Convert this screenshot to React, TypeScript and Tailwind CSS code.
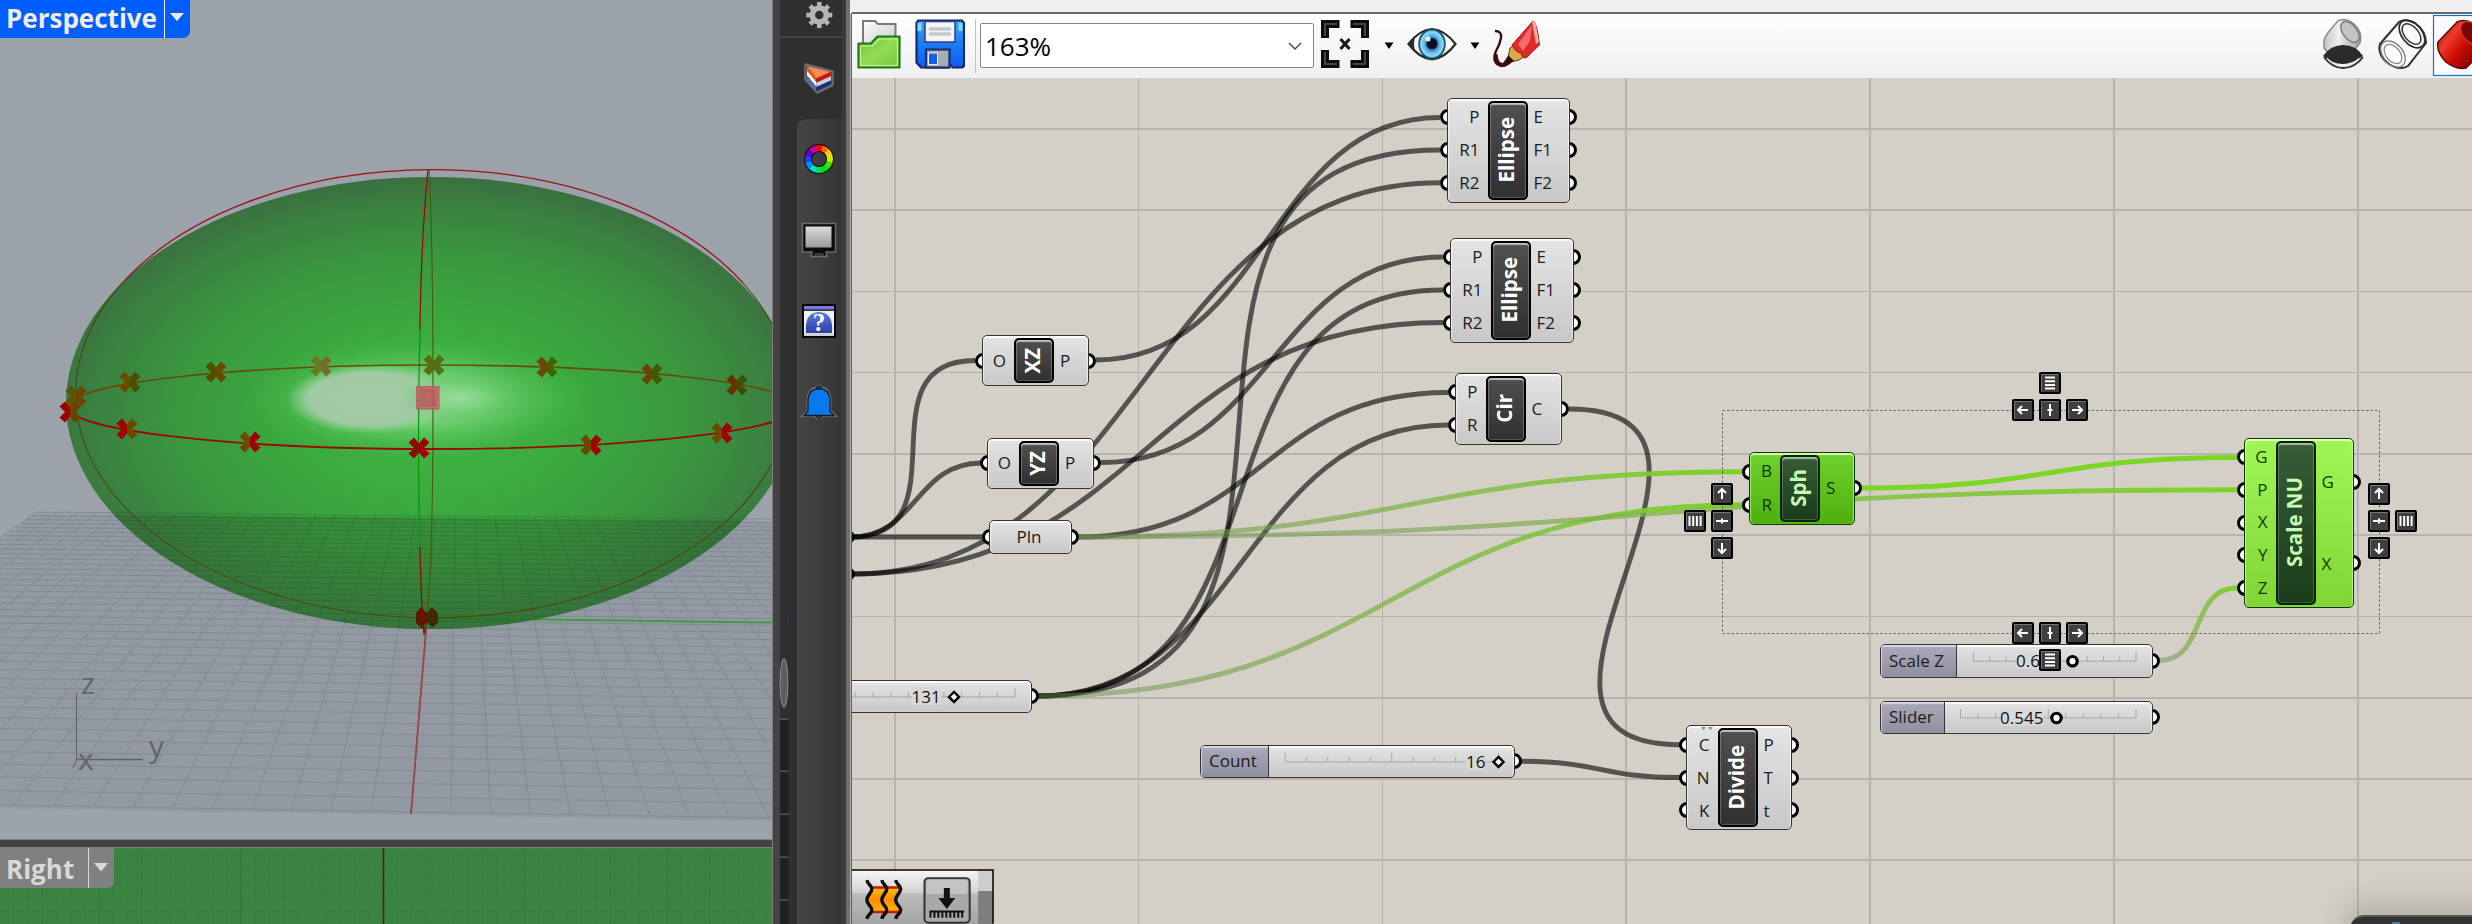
import React from "react";

type Pt = [number, number];

const OX = 852;
const OY = 78;
const UI = "font-['Open_Sans','Noto_Sans',sans-serif]";

/* ---------- 3D viewport ---------- */

const rowInfo = (i: number) => {
  const w = 1 / (0.02513 + 0.000628 * i);
  const y = 812 - (39.8 - w) / 0.0672;
  const slope = 0.0095 + ((w - 19.9) / 19.9) * 0.0073;
  return { w, y, slope, ax: 411 + (812 - y) * 0.0816 };
};
const gridPoint = (i: number, j: number): Pt => {
  const r = rowInfo(i);
  return [r.ax + j * r.w, r.y + r.slope * j * r.w];
};
const gridPath = () => {
  let d = "";
  for (let k = 0; k <= 40; k++) {
    const a = gridPoint(k, -20);
    const b = gridPoint(k, 20);
    d += `M${a[0]} ${a[1]}L${b[0]} ${b[1]}`;
    const e = gridPoint(0, k - 20);
    const f = gridPoint(40, k - 20);
    d += `M${e[0]} ${e[1]}L${f[0]} ${f[1]}`;
  }
  return d;
};
const GRID = gridPath();
const FLOOR = "M37 514L772 521V821L0 808V540Z";

function Cross({ x, y, l, r }: { x: number; y: number; l: string; r: string }) {
  return (
    <g transform={`translate(${x} ${y})`}>
      <path d="M0 -4.500L-5 -10.500L-10.500 -5.500L-5 0L-10.500 5.500L-5 10.500L0 4.500Z" fill={l} />
      <path d="M0 -4.500L5 -10.500L10.500 -5.500L5 0L10.500 5.500L5 10.500L0 4.500Z" fill={r} />
    </g>
  );
}

const backCrosses: [number, number, string, string][] = [
  [76, 396, "#5f5200", "#6d4500"],
  [130, 382, "#6b4a00", "#4a5200"],
  [216, 372, "#4f5000", "#6b4a00"],
  [321, 366, "#6a7a20", "#7a6a2c"],
  [434, 365, "#5c6a10", "#55701a"],
  [547, 367, "#6b4a00", "#3f6400"],
  [652, 374, "#6b4200", "#3c5c00"],
  [737, 385, "#6b3000", "#3f5000"],
];
const frontCrosses: [number, number, string, string][] = [
  [70, 412, "#a00000", "#6b4000"],
  [127, 429, "#a00000", "#6b4a00"],
  [250, 442, "#6b4a00", "#a00000"],
  [419, 448, "#8e0a00", "#a00000"],
  [591, 445, "#6b4a00", "#a00000"],
  [722, 433, "#6b4a00", "#a00000"],
];

function Scene() {
  return (
    <svg viewBox="0 0 772 839" className="block h-[839px] w-[772px]">
      <defs>
        <linearGradient id="sky" x1="0" y1="0" x2="0" y2="1">
          <stop offset="0" stopColor="#9ba2a9" />
          <stop offset="1" stopColor="#9ca3ab" />
        </linearGradient>
        <radialGradient id="body" gradientUnits="userSpaceOnUse" cx="0" cy="0" r="1" gradientTransform="translate(432 416) scale(385 240)">
          <stop offset="0" stopColor="#3fb643" />
          <stop offset="0.35" stopColor="#3bab3f" />
          <stop offset="0.65" stopColor="#3a983f" />
          <stop offset="0.88" stopColor="#3a8140" />
          <stop offset="1" stopColor="#3b6f40" />
        </radialGradient>
        <radialGradient id="glow">
          <stop offset="0" stopColor="#a5dca6" stopOpacity="0.95" />
          <stop offset="0.45" stopColor="#7dd681" stopOpacity="0.7" />
          <stop offset="1" stopColor="#49c04d" stopOpacity="0" />
        </radialGradient>
        <radialGradient id="spot">
          <stop offset="0" stopColor="#a3cda6" />
          <stop offset="0.75" stopColor="#9fcaa2" />
          <stop offset="1" stopColor="#8fd292" stopOpacity="0" />
        </radialGradient>
        <clipPath id="solid">
          <ellipse cx="431" cy="403" rx="365" ry="226" />
        </clipPath>
      </defs>
      <rect width="772" height="839" fill="url(#sky)" />
      <path d={FLOOR} fill="#9299a2" />
      <path d={GRID} fill="none" stroke="#828892" strokeWidth="0.9" />
      <path d="M427 618L772 622.500" stroke="#3f9c44" strokeWidth="2" />
      <path d="M427 618L411 814" stroke="#9c4144" strokeWidth="1.8" />
      <ellipse cx="431" cy="403" rx="365" ry="226" fill="url(#body)" />
      <g clipPath="url(#solid)">
        <path d={FLOOR} fill="#2a4a30" opacity="0.24" />
        <path d={GRID} fill="none" stroke="#1f4a26" strokeWidth="0.8" opacity="0.28" />
        <path d="M427 618L560 620" stroke="#1f7a22" strokeWidth="2" />
      </g>
      <ellipse cx="418" cy="399" rx="172" ry="60" fill="url(#glow)" />
      <ellipse cx="371" cy="399" rx="84" ry="35" fill="url(#spot)" />
      <ellipse cx="460" cy="398" rx="60" ry="24" fill="url(#glow)" opacity="0.8" />
      <path d="M126 279A357 224 0 0 1 743 283" fill="none" stroke="#9b1218" strokeWidth="1.3" />
      <path d="M126 279A357 224 0 1 0 743 283" fill="none" stroke="#4a4a10" strokeWidth="1.1" />
      <path d="M428 170Q421 240 420 330" fill="none" stroke="#a00000" strokeWidth="1.2" />
      <path d="M420 330Q417 440 420 548" fill="none" stroke="#009a00" strokeWidth="1.2" />
      <path d="M420 547Q421 600 424 635L427 618" fill="none" stroke="#8e0a00" strokeWidth="1.2" />
      <path d="M429 170Q433 240 433 400T427 617" fill="none" stroke="#4a5c00" strokeWidth="1.1" />
      <path d="M68 407A364 42 0 0 1 796 407" fill="none" stroke="#6b4a0a" strokeWidth="1.6" />
      <path d="M68 407A364 42 0 0 0 796 407" fill="none" stroke="#9c0a05" strokeWidth="1.8" />
      {backCrosses.map(([x, y, l, r]) => (
        <Cross key={x} x={x} y={y} l={l} r={r} />
      ))}
      {frontCrosses.map(([x, y, l, r]) => (
        <Cross key={x} x={x} y={y} l={l} r={r} />
      ))}
      <path d="M427 613L421 607L416 613V623L421 627.500L427 622Z" fill="#5a1a00" />
      <path d="M427 613L432 607L438 613V623L432 627.500L427 622Z" fill="#402a00" />
      <path d="M422 607V628" stroke="#8e0a00" strokeWidth="1.500" />
      <rect x="416" y="386" width="23.500" height="23.500" fill="#c2555c" opacity="0.88" />
      <rect x="418" y="388" width="19.500" height="19.500" fill="none" stroke="#d88a8e" strokeDasharray="1 1" />
      <path d="M420 386V409M427 393V405M421 408L426 403" stroke="#8d8a4c" strokeWidth="0.9" />
      <g stroke="#5f6266" strokeWidth="1" fill="none">
        <path d="M76.500 693V760L73 768" />
        <path d="M77 759.500H143" strokeWidth="1.500" />
        <path d="M77 757L100 756" stroke="#868b92" />
      </g>
      <g className={UI} fontSize="30" fill="#63666a">
        <text x="81" y="694">z</text>
        <text x="78" y="770">x</text>
        <text x="149" y="757">y</text>
      </g>
    </svg>
  );
}

function ViewTitle({ label, active }: { label: string; active?: boolean }) {
  return (
    <div
      className={
        active
          ? "absolute left-0 top-0 flex h-[38px] w-[190px] rounded-br-[7px] bg-[#005eff] text-[#f1ecdd]"
          : "absolute left-0 top-0 flex h-[40px] w-[114px] rounded-br-[7px] bg-[#808080] text-[#d9d9d9]"
      }
    >
      <div className={active ? "w-[164px] pl-[6px]" : "w-[88px] pl-[6px]"}>
        <span className={`${UI} block text-[26px] font-bold ${active ? "leading-[37px]" : "leading-[42px]"}`}>{label}</span>
      </div>
      <div className="w-px bg-current" />
      <svg viewBox="0 0 25 38" className="h-[38px] w-[25px]">
        <path d={active ? "M5 13H19L12 21Z" : "M5 15H19L12 23.500Z"} fill="currentColor" />
      </svg>
    </div>
  );
}

function RightView() {
  const fine: React.ReactNode[] = [];
  for (let k = -27; k < 28; k++) {
    const x = 383 + k * 14.2;
    fine.push(<path key={"v" + k} d={`M${x} 0V76`} stroke="#2b6b31" opacity={k % 10 === 0 ? 0.55 : 0.22} />);
  }
  for (let k = 0; k < 6; k++) {
    fine.push(<path key={"h" + k} d={`M0 ${6.5 + k * 14.3}H772`} stroke="#2b6b31" opacity={0.22} />);
  }
  return (
    <div className="relative h-[76px] w-[772px] overflow-hidden bg-[#3a8340]">
      <svg viewBox="0 0 772 76" className="block h-[76px] w-[772px]">
        {fine}
        <path d="M383.500 0V76" stroke="#6b1a05" strokeWidth="1.500" />
      </svg>
      <ViewTitle label="Right" />
    </div>
  );
}

/* ---------- dark side panel ---------- */

function SidePanel() {
  const hues = ["#ff0000", "#ff6a00", "#ffd000", "#c8f000", "#40e000", "#00e000", "#00e060", "#00e0c0", "#0090ff", "#2040ff", "#6000d0", "#c000a0"];
  return (
    <svg viewBox="772 0 80 924" className="block h-[924px] w-[80px] shrink-0">
      <defs>
        <linearGradient id="panel" x1="0" x2="1">
          <stop offset="0" stopColor="#454545" />
          <stop offset="1" stopColor="#353535" />
        </linearGradient>
        <linearGradient id="screen" x1="0" y1="0" x2="0" y2="1">
          <stop offset="0" stopColor="#dcdcdc" />
          <stop offset="1" stopColor="#9a9a9a" />
        </linearGradient>
        <linearGradient id="help" x1="0" y1="0" x2="0" y2="1">
          <stop offset="0" stopColor="#5f7ae6" />
          <stop offset="1" stopColor="#2c3ea0" />
        </linearGradient>
      </defs>
      <rect x="772" y="0" width="80" height="924" fill="#434343" />
      <rect x="771" y="0" width="2" height="924" fill="#7c7c7c" />
      <rect x="780" y="0" width="18" height="924" fill="#2f2f2f" />
      <rect x="797" y="100" width="45" height="824" fill="url(#panel)" />
      <path d="M780 38H842V110Q842 119 833 119H807Q797 119 797 129V200H780Z" fill="#2f2f2f" />
      <path d="M780 0H842V36H780Z" fill="#2f2f2f" />
      <rect x="780" y="36" width="62" height="2" fill="#454545" />
      <rect x="842" y="0" width="4" height="924" fill="#3a3a3a" />
      <rect x="846" y="0" width="4.500" height="924" fill="#707070" />
      <rect x="850" y="0" width="2" height="14" fill="#efefef" />
      <rect x="850" y="14" width="1" height="910" fill="#b0b0b0" />
      <rect x="851" y="13" width="1" height="911" fill="#5f5f5f" />
      <rect x="780" y="719" width="8.500" height="205" fill="#202020" />
      {[718.5, 770.5, 813.5, 856.5, 899.5].map((y) => (
        <rect key={y} x="780" y={y} width="8.500" height="1.500" fill="#555" />
      ))}
      <rect x="787.500" y="616" width="1" height="7" fill="#2a3a80" />
      <ellipse cx="784" cy="683" rx="3.800" ry="24.500" fill="#5e5e5e" stroke="#8e8e8e" strokeWidth="1" />

      <g transform="translate(819.300 15)">
        {[0, 45, 90, 135, 180, 225, 270, 315].map((a) => (
          <rect key={a} x="-2.300" y="-13" width="4.600" height="7" fill="#b5b5b5" transform={`rotate(${a})`} />
        ))}
        <circle r="7" fill="none" stroke="#b5b5b5" strokeWidth="5.500" />
      </g>

      <g transform="translate(819 78.500)" strokeLinejoin="round">
        <path d="M-13.500 -14L13.500 -7V6.500L-2 14L-13.500 1Z" fill="#111" stroke="#6b6b6b" strokeWidth="2.500" />
        <path d="M-12 -12.500L12 -6.500L-2.500 0Z" fill="#f08a5f" />
        <path d="M-12 -12.500L-2.500 0V4L-12 -8Z" fill="#ee5a18" />
        <path d="M-2.500 0L12 -6.500V-2.500L-2.500 4Z" fill="#d80f0f" />
        <path d="M-12 -8L-2.500 4V8.500L-12 -3Z" fill="#fff" />
        <path d="M-2.500 4L12 -2.500V2L-2.500 8.500Z" fill="#cfcfcf" />
        <path d="M-12 -3L-2.500 8.500V12.500L-12 1Z" fill="#4a6ae0" />
        <path d="M-2.500 8.500L12 2V5.500L-2.500 12.500Z" fill="#1c3488" />
      </g>

      <g transform="translate(819 159)">
        <circle r="11" fill="none" stroke="#0a0a0a" strokeWidth="8" />
        {hues.map((c, i) => (
          <path key={c} d="M0 -11A11 11 0 0 1 5.900 -9.300" transform={`rotate(${i * 30 - 15})`} stroke={c} strokeWidth="6" fill="none" />
        ))}
      </g>

      <g transform="translate(819 239)">
        <path d="M-16.500 -15.500H16.500V13H7L8 17.500H-8L-7 13H-16.500Z" fill="#0b0b0b" stroke="#6b6b6b" strokeWidth="1.500" />
        <rect x="-13.500" y="-12.500" width="26" height="21" fill="url(#screen)" />
        <path d="M-4 14H4L6 17H-6Z" fill="#3a3a3a" />
      </g>

      <g transform="translate(819 321)">
        <rect x="-16" y="-16" width="32" height="32" fill="#f0f0f0" stroke="#080808" strokeWidth="2" />
        <rect x="-15" y="-15" width="30" height="4" fill="#7b78d8" />
        <rect x="-15" y="-11.500" width="30" height="1.300" fill="#111" />
        <path d="M-13 12Q-15 -8.500 0 -9Q15 -8.500 13 12Z" fill="url(#help)" />
        <path d="M-15 12.500H15V15H-15Z" fill="#cfcfcf" />
        <text x="0" y="9.500" textAnchor="middle" fontSize="25" fontWeight="bold" fill="#fff" className="font-['Liberation_Serif',serif]">
          ?
        </text>
      </g>

      <g transform="translate(819 402)" stroke="#1b1b1b" strokeWidth="1.300">
        <path d="M-15.500 13.500L-11 9V-3Q-10 -13 -3 -14Q0 -18 3 -14Q10 -13 11 -3V9L15.500 13.500Q9 13 4 13.500Q0 18 -4 13.500Q-9 13 -15.500 13.500Z" fill="none" stroke="#707070" strokeWidth="3" />
        <circle cy="-13.500" r="2.400" fill="#0b63c8" />
        <circle cy="13.500" r="2.600" fill="#0b63c8" />
        <path d="M-15 13.500L-11 9V-3Q-10 -13 0 -13.500Q10 -13 11 -3V9L15 13.500Z" fill="#0878ee" />
      </g>
    </svg>
  );
}

/* ---------- toolbar ---------- */

function FolderIcon() {
  return (
    <svg viewBox="0 0 44 50" className="h-[50px] w-[44px]">
      <defs>
        <linearGradient id="fold" x1="0" y1="0" x2="1" y2="1">
          <stop offset="0" stopColor="#6fbf3c" />
          <stop offset="0.5" stopColor="#92dc52" />
          <stop offset="1" stopColor="#74c540" />
        </linearGradient>
        <linearGradient id="pap" x1="0" y1="0" x2="1" y2="1">
          <stop offset="0" stopColor="#fff" />
          <stop offset="1" stopColor="#c9c9c9" />
        </linearGradient>
      </defs>
      <path d="M6 26V2H18L21 5H38.500V26Z" fill="url(#pap)" stroke="#7a7a7a" strokeWidth="2" />
      <path d="M1.500 48.500V24.500H14L20.500 17.500H42.500V48.500Z" fill="url(#fold)" stroke="#1c7a18" strokeWidth="2.200" strokeLinejoin="round" />
      <path d="M3.500 46.500V27H15.500L22 20H40.500V46.500Z" fill="none" stroke="#c8f29b" strokeWidth="1.200" />
    </svg>
  );
}

function SaveIcon() {
  return (
    <svg viewBox="0 0 50 50" className="h-[50px] w-[50px]">
      <defs>
        <linearGradient id="disk" x1="0" y1="0" x2="0" y2="1">
          <stop offset="0" stopColor="#3aa5f5" />
          <stop offset="0.5" stopColor="#1c7cf0" />
          <stop offset="1" stopColor="#0f5cf5" />
        </linearGradient>
      </defs>
      <path d="M3 1.500H47L49 4V46Q49 48.500 46 48.500H37.500L36 46H33V48.500H6L1.500 43.500V4Z" fill="url(#disk)" stroke="#15296e" strokeWidth="2.200" />
      <path d="M4.500 4V12M45.500 4V12" stroke="#7adcff" strokeWidth="4" />
      <rect x="10" y="2.500" width="30" height="20.500" fill="#f4f4f4" stroke="#24418a" strokeWidth="1.500" />
      <path d="M14 10H36M14 15H36" stroke="#c3c9c9" strokeWidth="3.500" />
      <rect x="11" y="30.500" width="23.500" height="18" fill="#a9adb5" stroke="#1a3070" strokeWidth="2.200" />
      <rect x="13.500" y="34" width="9" height="11.500" fill="#155eee" stroke="#f0f0f0" strokeWidth="1" />
    </svg>
  );
}

function FrameIcon() {
  return (
    <svg viewBox="0 0 50 50" className="h-[50px] w-[50px]">
      <g fill="none" stroke="#0c0c0c" strokeWidth="8">
        <path d="M5 19V5H19.500M30.500 5H45V19M45 31V45H30.500M19.500 45H5V31" />
      </g>
      <g fill="none" stroke="#444" strokeWidth="2">
        <path d="M5 17V5H17M33 5H45V17M45 33V45H33M17 45H5V33" />
      </g>
      <path d="M20.500 20L29.500 30M29.500 20L20.500 30" stroke="#1a1a1a" strokeWidth="3.200" />
    </svg>
  );
}

function EyeIcon() {
  return (
    <svg viewBox="0 0 50 34" className="h-[34px] w-[50px]">
      <defs>
        <radialGradient id="iris">
          <stop offset="0.3" stopColor="#1b4fa8" />
          <stop offset="0.6" stopColor="#63b8e8" />
          <stop offset="0.85" stopColor="#8adcf8" />
          <stop offset="1" stopColor="#2c6f94" />
        </radialGradient>
      </defs>
      <path d="M1.500 17Q12 3 25 2Q38 3 48.500 17Q38 31 25 32.500Q12 31 1.500 17Z" fill="#f7f7f7" stroke="#2b2b2b" strokeWidth="2.200" />
      <path d="M1 17L8 11Q6 17 8 23Z" fill="#2b2b2b" />
      <ellipse cx="25" cy="17" rx="13" ry="14.500" fill="url(#iris)" stroke="#1c4c6b" strokeWidth="1.500" />
      <circle cx="25" cy="16.500" r="5.500" fill="#06101f" />
      <circle cx="21" cy="12" r="2.600" fill="#fff" opacity="0.85" />
    </svg>
  );
}

function PenIcon() {
  return (
    <svg viewBox="0 0 48 48" className="h-[48px] w-[48px]">
      <path d="M3 11Q10 11 9 18Q8 24 4 31Q-1 43 9 46Q15 46 20 40" fill="none" stroke="#3a0808" strokeWidth="2.300" />
      <path d="M2 34Q1 44 10 47Q16 46.500 22 40L16 36L11 43Q6 43 5.500 34Z" fill="#3a0c0c" />
      <path d="M15 43L18 28L22 25L33 36L27 40Z" fill="#d8aa4a" stroke="#5a3a10" strokeWidth="1" />
      <path d="M14 45L16 35L22 41Z" fill="#2a0808" />
      <path d="M20 25L41 1Q45 2 47.500 25L34 38Q30 38 29 33Q24 33 20 25Z" fill="#dd2b2b" stroke="#a31b1b" strokeWidth="1" />
      <path d="M26 24L40 5L38 21L31 31Z" fill="#f46a6a" />
      <path d="M40 2L43 0L47 22L44 24Z" fill="#eaa9a9" />
    </svg>
  );
}

function DropArrow() {
  return (
    <svg viewBox="0 0 10 8" className="mt-[4px] h-[8px] w-[10px]">
      <path d="M0.500 0.500H9.500L5 7Z" fill="#000" />
    </svg>
  );
}

function Toolbar() {
  return (
    <div className="flex h-[64px] w-full items-center overflow-hidden bg-gradient-to-b from-[#fdfdfd] to-[#f0f0f0] pl-[5px]">
      <div className="mt-[-4px] flex h-[60px] items-center">
        <FolderIcon />
        <div className="w-[14px]" />
        <SaveIcon />
        <div className="ml-[10px] mr-[4px] mt-[4px] h-[54px] w-px bg-[#c2c2c2]" />
        <div className="mt-[3px] flex h-[45px] w-[334px] items-center justify-between rounded-[2px] border border-[#858585] bg-white pl-[4px] pr-[11px]">
          <span className={`${UI} text-[26px] leading-none text-black`}>163%</span>
          <svg viewBox="0 0 14 8" className="h-[8px] w-[14px]">
            <path d="M1 1L7 7L13 1" fill="none" stroke="#444" strokeWidth="1.400" />
          </svg>
        </div>
        <div className="w-[6px]" />
        <FrameIcon />
        <div className="w-[14px]" />
        <DropArrow />
        <div className="w-[13px]" />
        <EyeIcon />
        <div className="w-[13px]" />
        <DropArrow />
        <div className="w-[12px]" />
        <PenIcon />
      </div>
      <div className="flex-1" />
      <svg viewBox="2320 14 152 64" className="h-[64px] w-[152px] shrink-0">
        <defs>
          <linearGradient id="cy1" x1="0" x2="1">
            <stop offset="0" stopColor="#c4c4c4" />
            <stop offset="0.4" stopColor="#f0f0f0" />
            <stop offset="1" stopColor="#9c9c9c" />
          </linearGradient>
          <linearGradient id="cy2" x1="0" y1="0" x2="1" y2="1">
            <stop offset="0" stopColor="#8e0a05" />
            <stop offset="0.35" stopColor="#ee3a2c" />
            <stop offset="0.6" stopColor="#cf0d05" />
            <stop offset="1" stopColor="#6e0503" />
          </linearGradient>
        </defs>
        <path d="M2324 41Q2324 36 2338 21Q2345 17 2354 24Q2363 32 2360 43L2350 56Q2330 58 2324 48Z" fill="url(#cy1)" stroke="#8a8a8a" strokeWidth="1.500" />
        <ellipse cx="2350" cy="32" rx="7" ry="12" transform="rotate(-38 2350 32)" fill="#c4c4c4" stroke="#808080" strokeWidth="1.500" />
        <path d="M2323 56Q2331 45 2343 45Q2356 45 2363 56Q2352 64 2343 64Q2332 64 2323 56Z" fill="#2b2b2b" />
        <path d="M2324 57Q2332 68 2343 68Q2355 68 2363 57" fill="none" stroke="#333" strokeWidth="2" />
        <path d="M2327 58.500Q2335 66 2343 66Q2352 66 2359 58.500" fill="none" stroke="#e6e6e6" strokeWidth="1.200" />
        <g fill="none" stroke="#2f2f2f">
          <path d="M2380 44L2399 22Q2405 18 2415 23Q2426 31 2426 43L2408 66Q2400 71 2389 64Q2377 55 2380 44Z" fill="#fafafa" strokeWidth="2" />
          <ellipse cx="2412" cy="34" rx="10" ry="16" transform="rotate(-40 2412 34)" strokeWidth="1.700" />
          <ellipse cx="2411.500" cy="34" rx="7" ry="12" transform="rotate(-40 2411.500 34)" strokeWidth="1.400" />
          <ellipse cx="2393" cy="54" rx="10" ry="15" transform="rotate(-40 2393 54)" stroke="#7a7a7a" strokeWidth="1.300" />
          <ellipse cx="2393" cy="54" rx="7" ry="11" transform="rotate(-40 2393 54)" stroke="#8a8a8a" strokeWidth="1.200" />
        </g>
        <rect x="2433.500" y="15.500" width="60" height="60" fill="#fbfbfb" stroke="#1275cc" strokeWidth="1.200" />
        <path d="M2438 42L2457 22Q2464 18 2474 24V60L2466 68Q2456 70 2446 62Q2436 52 2438 42Z" fill="url(#cy2)" stroke="#5a0805" strokeWidth="1.500" />
        <ellipse cx="2471" cy="33" rx="8.500" ry="13" transform="rotate(-38 2471 33)" fill="#7a0603" stroke="#e03a30" strokeWidth="1.200" />
      </svg>
    </div>
  );
}

/* ---------- graph canvas ---------- */

interface NodeData {
  x: number;
  y: number;
  w: number;
  h: number;
  core: number;
  title: string;
  ins: string[];
  outs: string[];
  tone: "grey" | "green" | "lime";
}

const nodes: NodeData[] = [
  { x: 1447, y: 97.5, w: 123, h: 105, core: 41, title: "Ellipse", ins: ["P", "R1", "R2"], outs: ["E", "F1", "F2"], tone: "grey" },
  { x: 1450, y: 237.5, w: 123.5, h: 105, core: 41, title: "Ellipse", ins: ["P", "R1", "R2"], outs: ["E", "F1", "F2"], tone: "grey" },
  { x: 1455, y: 372.5, w: 107, h: 72, core: 31, title: "Cir", ins: ["P", "R"], outs: ["C"], tone: "grey" },
  { x: 982, y: 335, w: 107, h: 51, core: 32.5, title: "XZ", ins: ["O"], outs: ["P"], tone: "grey" },
  { x: 987, y: 437.5, w: 107, h: 51, core: 32.5, title: "YZ", ins: ["O"], outs: ["P"], tone: "grey" },
  { x: 1686, y: 725, w: 106, h: 105, core: 32, title: "Divide", ins: ["C", "N", "K"], outs: ["P", "T", "t"], tone: "grey" },
  { x: 1749, y: 451.5, w: 106, h: 73, core: 31.5, title: "Sph", ins: ["B", "R"], outs: ["S"], tone: "green" },
  { x: 2243.5, y: 437.5, w: 110, h: 170, core: 32.5, title: "Scale NU", ins: ["G", "P", "X", "Y", "Z"], outs: ["G", "X"], tone: "lime" },
];

const shell = {
  grey: "border-[#333] from-[#e4e4e4] to-[#c8c8c8] text-[#1c1c1c]",
  green: "border-[#0d3808] from-[#6fd12c] to-[#4fb00c] text-[#0f3306]",
  lime: "border-[#0d3808] from-[#a0f754] to-[#80d534] text-[#143806]",
};
const rim = {
  grey: "shadow-[inset_0_2px_1px_rgba(255,255,255,0.9),inset_1px_0_1px_rgba(255,255,255,0.6),inset_-1px_0_1px_rgba(255,255,255,0.6)]",
  green: "shadow-[inset_0_2px_1px_rgba(225,255,190,0.9),inset_1px_0_1px_rgba(200,255,150,0.6),inset_-1px_0_1px_rgba(200,255,150,0.6)]",
  lime: "shadow-[inset_0_2px_1px_rgba(235,255,210,0.9),inset_1px_0_1px_rgba(220,255,180,0.6),inset_-1px_0_1px_rgba(220,255,180,0.6)]",
};

function Port({ x, y }: { x: number; y: number }) {
  return (
    <div
      className="absolute h-[16px] w-[16px] rounded-full border-[3px] border-black bg-white"
      style={{ left: x - 8, top: y - 8 }}
    />
  );
}

function Component({ n }: { n: NodeData }) {
  const inner = n.h - 7;
  const portY = (i: number, count: number) => 3.5 + (inner * (i + 0.5)) / count;
  const core =
    n.tone === "grey"
      ? "from-[#505050] to-[#303030] border-black text-white shadow-[inset_0_2px_1px_rgba(255,255,255,0.6),inset_0_0_0_1px_rgba(255,255,255,0.18)]"
      : "from-[#385c38] to-[#193c1a] border-[#082208] text-[#c2ffb0] shadow-[inset_0_2px_1px_rgba(230,255,230,0.6),inset_0_0_0_1px_rgba(255,255,255,0.15)]";
  return (
    <div className="absolute" style={{ left: n.x - OX, top: n.y - OY, width: n.w, height: n.h }}>
      {n.ins.map((_, i) => (
        <Port key={"i" + i} x={1} y={portY(i, n.ins.length)} />
      ))}
      {n.outs.map((_, i) => (
        <Port key={"o" + i} x={n.w - 1} y={portY(i, n.outs.length)} />
      ))}
      <div className={`${UI} ${shell[n.tone]} ${rim[n.tone]} absolute inset-0 flex rounded-[5px] border-[1.500px] bg-gradient-to-b py-[2px] text-[17px] leading-none`}>
        <div className="flex flex-col items-end pr-[8px]" style={{ width: n.core - 1.5 }}>
          {n.ins.map((t) => (
            <div key={t} className="flex flex-1 items-center pb-[1px]">
              {t}
            </div>
          ))}
        </div>
        <div className={`${core} flex w-[40px] items-center justify-center rounded-[5px] border-2 bg-gradient-to-b pr-[3px]`}>
          <span className="rotate-180 whitespace-nowrap text-[20.500px] font-bold leading-none [writing-mode:vertical-rl]">{n.title}</span>
        </div>
        <div className="flex flex-col items-start pl-[6px]">
          {n.outs.map((t) => (
            <div key={t} className="flex flex-1 items-center pb-[1px]">
              {t}
            </div>
          ))}
        </div>
      </div>
    </div>
  );
}

interface SliderData {
  x: number;
  y: number;
  w: number;
  h: number;
  label?: string;
  labelW: number;
  base: [number, number];
  steps: number;
  tall: number[];
  value: string;
  valueX: number;
  knob: number;
  round?: boolean;
}

const sliders: SliderData[] = [
  { x: 840, y: 679.5, w: 192, h: 33.5, labelW: 0, base: [837.5, 1015], steps: 10, tall: [5, 10], value: "131", valueX: 911.5, knob: 954 },
  { x: 1199.5, y: 744.5, w: 315, h: 33.5, label: "Count", labelW: 69, base: [1284.5, 1498], steps: 10, tall: [0, 5, 10], value: "16", valueX: 1466, knob: 1498 },
  { x: 1879.5, y: 643.5, w: 273, h: 34, label: "Scale Z", labelW: 77, base: [1973, 2135.5], steps: 10, tall: [0, 10], value: "0.6", valueX: 2016, knob: 2072, round: true },
  { x: 1879.5, y: 700.5, w: 273, h: 33.5, label: "Slider", labelW: 65.5, base: [1960, 2135.5], steps: 10, tall: [0, 5, 10], value: "0.545", valueX: 2000, knob: 2056, round: true },
];

function Slider({ s }: { s: SliderData }) {
  const cy = s.h / 2 + 0.2;
  const ticks: React.ReactNode[] = [];
  for (let i = 0; i <= s.steps; i++) {
    const x = s.base[0] - s.x + ((s.base[1] - s.base[0]) * i) / s.steps;
    const hgt = s.tall.includes(i) ? 9 : 5;
    ticks.push(<path key={i} d={`M${x} ${cy}v${-hgt}`} stroke="#a8a8a8" />);
  }
  return (
    <div className="absolute" style={{ left: s.x - OX, top: s.y - OY, width: s.w, height: s.h }}>
      <Port x={s.w - 1} y={s.h / 2} />
      <div className={`${UI} ${shell.grey} ${rim.grey} absolute inset-0 flex overflow-hidden rounded-[5px] border-[1.500px] bg-gradient-to-b text-[17px] leading-none`}>
        {s.label && (
          <div
            className="flex items-center border-r-[1.500px] border-[#333] bg-gradient-to-b from-[#aaaaba] to-[#8f8fa1] pl-[8.500px] shadow-[inset_1px_2px_1px_rgba(235,235,250,0.7)]"
            style={{ width: s.labelW - 1 }}
          >
            <span className="whitespace-nowrap pb-[1px] text-[17px]">{s.label}</span>
          </div>
        )}
      </div>
      <svg className="absolute left-0 top-0 overflow-visible" width={s.w} height={s.h}>
        <path d={`M${s.base[0] - s.x} ${cy}H${s.base[1] - s.x}`} stroke="#a8a8a8" />
        {ticks}
        {s.round ? (
          <circle cx={s.knob - s.x} cy={cy} r="4.700" fill="#fff" stroke="#000" strokeWidth="3.200" />
        ) : (
          <path d="M0 -5L5 0L0 5L-5 0Z" transform={`translate(${s.knob - s.x} ${cy})`} fill="#fff" stroke="#000" strokeWidth="2.400" />
        )}
      </svg>
      <span
        className={`${UI} absolute top-[calc(50%-0.500px)] -translate-y-1/2 bg-[#d8d8d8] text-[17px] leading-none text-[#111]`}
        style={{ left: s.valueX - s.x }}
      >
        {s.value}
      </span>
    </div>
  );
}

const wire = (x1: number, y1: number, x2: number, y2: number) => {
  const off = Math.max((x2 - x1) / 2, Math.abs(y2 - y1) * 0.66);
  return `M${x1} ${y1}C${x1 + off} ${y1} ${x2 - off} ${y2} ${x2} ${y2}`;
};

const plainWires: [number, number, number, number][] = [
  [851, 537, 975, 360.5],
  [851, 537, 981, 463],
  [851, 537, 982, 537],
  [851, 574, 1440, 182.8],
  [851, 574, 1443, 322.5],
  [1096, 360, 1440, 117.5],
  [1101, 462.5, 1443, 257],
  [1078, 537, 1448, 392.5],
  [1038, 696, 1440, 150],
  [1038, 696, 1443, 290],
  [1038, 696, 1448, 425],
  [1569, 409, 1680, 744.7],
  [1521, 761.3, 1680, 777.5],
];
const fadedWires: [number, number, number, number][] = [
  [1078, 537, 1743, 471.7],
  [1038, 696, 1743, 504.7],
  [1078, 537, 2237, 489.8],
  [2159, 660.5, 2237, 588],
];

const vlines: Pt[] = [[895, 2], [1138.5, 1], [1382.5, 1], [1626, 2], [1870, 2], [2114, 2], [2358, 2]];
const hlines: Pt[] = [[129, 2], [210, 2], [291.5, 1], [372.5, 1], [454, 2], [535, 2], [616.5, 1], [698, 2], [779, 2], [860, 2]];

function Wires() {
  return (
    <svg viewBox="852 78 1620 846" className="absolute inset-0 h-[846px] w-[1620px]">
      <defs>
        {fadedWires.map(([x1, , x2], i) => (
          <linearGradient key={i} id={"fade" + i} gradientUnits="userSpaceOnUse" x1={x1} x2={x2} y1="0" y2="0">
            <stop offset="0" stopColor="#6f8a50" stopOpacity="0.45" />
            <stop offset="0.5" stopColor="#80b548" stopOpacity="0.75" />
            <stop offset="1" stopColor="#7cd424" stopOpacity="1" />
          </linearGradient>
        ))}
      </defs>
      <g stroke="#000" opacity="0.13">
        {vlines.map(([x, w]) => (
          <path key={x} d={`M${x} 78V924`} strokeWidth={w} />
        ))}
        {hlines.map(([y, w]) => (
          <path key={y} d={`M852 ${y}H2472`} strokeWidth={w} />
        ))}
      </g>
      <g fill="none" stroke="#000" strokeOpacity="0.6" strokeWidth="4.900">
        {plainWires.map((p, i) => (
          <path key={i} d={wire(...p)} />
        ))}
      </g>
      <g fill="none" strokeWidth="4.900">
        {fadedWires.map((p, i) => (
          <path key={i} d={wire(...p)} stroke={`url(#fade${i})`} />
        ))}
        <path d={wire(1862, 488, 2237, 457.5)} stroke="#7cd624" />
      </g>
      <circle cx="849" cy="537" r="6" fill="#000" />
      <circle cx="849" cy="574" r="6" fill="#000" />
    </svg>
  );
}

type Glyph = "left" | "right" | "up" | "down" | "h" | "v" | "rows" | "cols";
const glyphs: Record<Glyph, string> = {
  left: "M16 11H6M10 7L6 11L10 15",
  right: "M6 11H16M12 7L16 11L12 15",
  up: "M11 16V6M7 10L11 6L15 10",
  down: "M11 6V16M7 12L11 16L15 12",
  h: "M5 11H17M11 8.500V13.500",
  v: "M11 5V17M8.500 11H13.500",
  rows: "M6 5.500H16M6 9.200H16M6 12.900H16M6 16.600H16",
  cols: "M5.500 6V16M9.200 6V16M12.900 6V16M16.600 6V16",
};
const handles: [number, number, Glyph][] = [
  [2050, 383, "rows"], [2023, 410, "left"], [2050, 410, "v"], [2077, 410, "right"],
  [2023, 633, "left"], [2050, 633, "v"], [2077, 633, "right"], [2050, 660, "rows"],
  [1722, 494, "up"], [1722, 521, "h"], [1722, 548, "down"], [1695, 521, "cols"],
  [2379, 494, "up"], [2379, 521, "h"], [2379, 548, "down"], [2406, 521, "cols"],
];

function Handle({ x, y, g }: { x: number; y: number; g: Glyph }) {
  return (
    <svg viewBox="0 0 22 22" className="absolute h-[22px] w-[22px]" style={{ left: x - 11 - OX, top: y - 11 - OY }}>
      <rect x="1" y="1" width="20" height="20" rx="1" fill="#3f3f3f" stroke="#000" strokeWidth="2" />
      <path d="M2.500 19.500V2.500H19.500" fill="none" stroke="#777" />
      <path d={glyphs[g]} fill="none" stroke="#fff" strokeWidth="2" />
    </svg>
  );
}

const heatWave = (x: number) =>
  `M${x} 880C${x + 1} 885 ${x + 5} 885 ${x + 5} 889S${x} 895 ${x} 900S${x + 5} 906 ${x + 5} 910S${x + 1} 914 ${x} 919`;

function CornerPalette() {
  return (
    <svg viewBox="851 869 143 55" className="absolute bottom-0 left-0 h-[55px] w-[142px]">
      <defs>
        <linearGradient id="pal" x1="0" y1="0" x2="0" y2="1">
          <stop offset="0" stopColor="#f6f6f6" />
          <stop offset="0.4" stopColor="#d2d2d2" />
          <stop offset="0.42" stopColor="#bcbcbc" />
          <stop offset="1" stopColor="#a2a2a2" />
        </linearGradient>
        <linearGradient id="heat" x1="0" y1="0" x2="0" y2="1">
          <stop offset="0" stopColor="#ffc400" />
          <stop offset="0.5" stopColor="#ff8a00" />
          <stop offset="1" stopColor="#ffb800" />
        </linearGradient>
      </defs>
      <rect x="851" y="870" width="142" height="56" fill="url(#pal)" />
      <rect x="978" y="870" width="15" height="21" fill="#cdcdcd" />
      <rect x="978" y="891" width="15" height="34" fill="#7e7e7e" />
      <path d="M851 869.800H993V924" fill="none" stroke="#000" strokeWidth="1.500" />
      <path d="M871 887C871 893 866 895 866 900S871 906 871 912H901C901 906 896 904 896 900S901 893 901 887Z" fill="url(#heat)" />
      <path d="M871 887.500H900M871 912H900" stroke="#c61a05" strokeWidth="2.500" />
      <g fill="none" stroke="#0c0c0c" strokeWidth="3.400">
        <path d={heatWave(866)} />
        <path d={heatWave(881)} />
        <path d={heatWave(895)} />
      </g>
      <rect x="924" y="878" width="45.500" height="45" rx="4" fill="#a9a9a9" stroke="#333" strokeWidth="2" />
      <rect x="926" y="880" width="41.500" height="14" rx="2" fill="#d6d6d6" opacity="0.6" />
      <path d="M929 911.500H964M930 912V918M934 912V918M938 912V918M942 912V918M946 912V918M950 912V918M954 912V918M958 912V918M962 912V918" stroke="#111" strokeWidth="2" />
      <path d="M943.500 888H949.500V898H955L946.500 909L938 898H943.500Z" fill="#111" />
    </svg>
  );
}

function GraphCanvas() {
  return (
    <div className="relative h-[846px] w-full overflow-hidden bg-[#d4d0c8]">
      <Wires />
      <svg viewBox="852 78 1620 846" className="absolute inset-0 h-[846px] w-[1620px]">
        <rect x="1722.500" y="410.500" width="657" height="223" fill="none" stroke="#6b6966" strokeDasharray="2.500 2" />
      </svg>
      {nodes.map((n, i) => (
        <Component key={i} n={n} />
      ))}
      <svg viewBox="0 0 14 4" className="absolute left-[848px] top-[649px] h-[4px] w-[14px]">
        <path d="M1 0H6L3.500 3ZM8 0H13L10.500 3Z" fill="#888" />
      </svg>
      {sliders.map((s, i) => (
        <Slider key={i} s={s} />
      ))}
      <div className="absolute left-[136.500px] top-[442px] h-[33.500px] w-[83px]">
        <Port x={1} y={17} />
        <Port x={82} y={17} />
        <div className={`${UI} ${shell.grey} ${rim.grey} absolute inset-0 flex items-center justify-center rounded-[5px] border-[1.500px] bg-gradient-to-b pb-[1px] pr-[2px] text-[17px] leading-none`}>
          Pln
        </div>
      </div>
      {handles.map(([x, y, g], i) => (
        <Handle key={i} x={x} y={y} g={g} />
      ))}
      <CornerPalette />
      <div className="absolute bottom-[-12px] right-[-20px] h-[21px] w-[142px] rounded-tl-[14px] border-t-2 border-[#55584f] bg-[#323232] shadow-[0_-4px_30px_8px_rgba(0,0,0,0.16)]" />
      <div className="absolute bottom-0 right-[72px] h-[2px] w-[8px] rounded-full bg-[#4f7fa5]" />
    </div>
  );
}

export default function App() {
  return (
    <div className="flex h-[924px] w-[2472px] overflow-hidden bg-[#434343]">
      <div className="flex w-[772px] shrink-0 flex-col">
        <div className="relative h-[839px]">
          <Scene />
          <ViewTitle label="Perspective" active />
        </div>
        <div className="h-[9px] border-y border-[#808080] bg-[#434343]" />
        <RightView />
      </div>
      <SidePanel />
      <div className="flex min-w-0 flex-1 flex-col">
        <div className="h-[14px] border-b-2 border-[#6a6a6a] bg-[#efefef]" />
        <Toolbar />
        <GraphCanvas />
      </div>
    </div>
  );
}
